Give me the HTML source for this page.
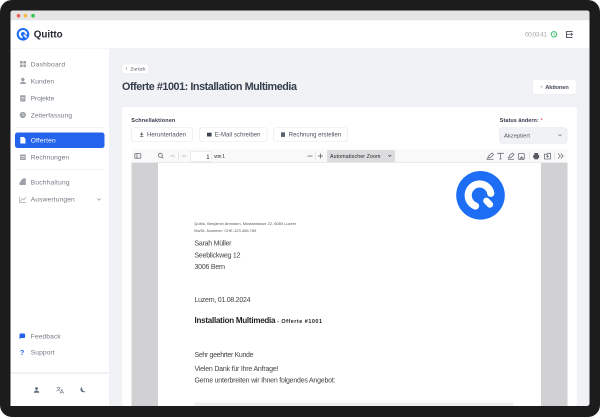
<!DOCTYPE html>
<html lang="de"><head><meta charset="utf-8"><title>Quitto</title>
<style>
html,body{margin:0;padding:0;background:#fff;width:600px;height:417px;overflow:hidden}
svg{display:block}
text{font-family:"Liberation Sans",sans-serif;dominant-baseline:auto;filter:blur(.22px)}
.n{font-size:6.6px;fill:#737983}
.b{font-size:6px;fill:#484f5b}
.d{font-size:7px;fill:#444}
.s{stroke:#6b6f76;fill:none;stroke-width:.8}
.g{fill:#9ca0a8}
</style></head><body>
<svg width="600" height="417" viewBox="0 0 600 417" xmlns="http://www.w3.org/2000/svg">
<rect width="600" height="417" rx="12" fill="#1c1c1c"/>
<rect x="10.500" y="10.500" width="579" height="395.500" rx="2.500" fill="#f1f2f5"/>
<path d="M10.500 20V13a2.500 2.500 0 0 1 2.500-2.500H587a2.500 2.500 0 0 1 2.500 2.500V20z" fill="#e5e5e5"/>
<circle cx="18.500" cy="15.700" r="1.800" fill="#ee5f57"/><circle cx="25.500" cy="15.700" r="1.800" fill="#f5bd3e"/><circle cx="33" cy="15.700" r="1.800" fill="#35c448"/>

<!-- header -->
<rect x="10.500" y="20.500" width="579" height="27.500" fill="#fff"/>
<rect x="10.500" y="48" width="98.500" height="358" fill="#fff"/>
<rect x="10.500" y="48" width="98.500" height=".6" fill="#eeeff2"/>
<circle cx="23" cy="34.300" r="6.300" fill="#1d6ef5"/>
<path d="M26.200 33.800A3.200 3.200 0 1 0 21.700 37.100" fill="none" stroke="#fff" stroke-width="2" stroke-linecap="round"/>
<path d="M24.300 35.300L26 37" stroke="#fff" stroke-width="1.700" stroke-linecap="round"/>
<text x="33.800" y="37.600" font-size="9.800" font-weight="700" fill="#24282f" textLength="28.800">Quitto</text>
<text x="525" y="36.500" font-size="6.500" fill="#a3a7ad" textLength="22">00:03:41</text>
<circle cx="554" cy="34.300" r="2.700" fill="none" stroke="#3cbf6e" stroke-width="1"/><path d="M554 32.800V34.500L555 35.500" stroke="#3cbf6e" stroke-width=".7" fill="none"/>
<path d="M572 32V31.500H566.500V37.500H572V37" fill="none" stroke="#5c6169" stroke-width="1.100"/><path d="M567 34.300H572.500M571 33L572.500 34.300L571 35.600" fill="none" stroke="#5c6169" stroke-width=".9"/>

<!-- sidebar -->
<g class="g"><rect x="20" y="61" width="2.600" height="2.600"/><rect x="23.400" y="61" width="2.600" height="2.600"/><rect x="20" y="64.500" width="2.600" height="2.600"/><rect x="23.400" y="64.500" width="2.600" height="2.600"/></g>
<text class="n" x="30.700" y="66.400" textLength="34.300">Dashboard</text>
<circle cx="22.800" cy="79.500" r="1.700" class="g"/><path d="M20 84c0-3 6-3 6 0z" class="g"/>
<text class="n" x="30.700" y="83.400" textLength="23.300">Kunden</text>
<rect x="20.200" y="95.300" width="5.300" height="6.200" rx=".6" class="g"/><rect x="21.400" y="97" width="3" height=".6" fill="#fff"/><rect x="21.400" y="98.700" width="3" height=".6" fill="#fff"/>
<text class="n" x="30.700" y="100.400" textLength="23.600">Projekte</text>
<circle cx="22.800" cy="115" r="3.100" class="g"/><path d="M22.800 113.300V115.200H24.300" stroke="#fff" stroke-width=".6" fill="none"/>
<text class="n" x="30.700" y="117.400" textLength="41.300">Zeiterfassung</text>
<rect x="15" y="127" width="89" height=".7" fill="#eceef1"/>
<rect x="15" y="132.500" width="89.500" height="15.500" rx="2.500" fill="#2463eb"/>
<path d="M20.300 137h3.500l1.700 1.700v4.800h-5.200z" fill="#fff"/>
<text x="30.700" y="142.500" font-size="6.600" fill="#fff" textLength="25">Offerten</text>
<rect x="20.200" y="154.500" width="5.500" height="5.500" class="g"/><rect x="21.200" y="156" width="3.500" height=".6" fill="#fff"/><rect x="21.200" y="157.800" width="3.500" height=".6" fill="#fff"/>
<text class="n" x="30.700" y="159.400" textLength="38.400">Rechnungen</text>
<rect x="15" y="169.300" width="89" height=".7" fill="#eceef1"/>
<path d="M19.500 185v-3l1.500-.5v-1.500l1.500-.5v-1l3.300-.3v6.800z" class="g"/>
<text class="n" x="30.700" y="184.700" textLength="38.800">Buchhaltung</text>
<path d="M19.500 196.500V202.500H26M20.500 201L22.500 198.500L24 199.700L26 197" fill="none" stroke="#a5a9b0" stroke-width=".7"/>
<text class="n" x="30.700" y="201.700" textLength="44">Auswertungen</text>
<path d="M97.300 198.500L99 200.200L100.700 198.500" fill="none" stroke="#8f939a" stroke-width=".7"/>
<path d="M19.500 334.500a1 1 0 0 1 1-1h3.600a1 1 0 0 1 1 1v2.500a1 1 0 0 1-1 1H21l-1.500 1z" fill="#2463eb"/>
<text class="n" x="30.700" y="338.600" textLength="30">Feedback</text>
<text x="20" y="354.800" font-size="7" font-weight="700" fill="#2463eb">?</text>
<text class="n" x="30.700" y="354.400" textLength="24">Support</text>
<rect x="10.500" y="372" width="98.500" height="2" fill="#f1f2f5"/>
<circle cx="36.500" cy="388.500" r="1.400" fill="#5f6b7a"/><path d="M33.800 392.700c0-3 5.400-3 5.400 0z" fill="#5f6b7a"/>
<path d="M56.500 387.500h4M58.500 386.800v.7M60 387.500c-.3 1.800-2 3-3.500 3.600M57.500 388.500c.5 1 1.300 1.700 2.400 2.200M60 393.500l1.800-4 1.800 4M60.700 392.300h2.200" fill="none" stroke="#6b7684" stroke-width=".6"/>
<path d="M81.800 387c-1.800.8-2 4.500 1 5.200 1 .2 2 0 2.800-.6-2.500 0-3.800-2-3.800-4.600z" fill="#5f6b7a"/>

<!-- main -->
<rect x="122" y="64" width="26.500" height="9.500" rx="2.500" fill="#fff" stroke="#e8e9ec" stroke-width=".5"/>
<path d="M127 67.700L125.900 68.700L127 69.700" fill="none" stroke="#555" stroke-width=".5"/>
<text x="130.500" y="70.600" font-size="4.700" fill="#3f4652" textLength="15">Zurück</text>
<text x="122" y="89.800" font-size="10.800" font-weight="700" fill="#353e4c" textLength="175">Offerte #1001: Installation Multimedia</text>
<rect x="532.500" y="79.500" width="44.500" height="15" rx="3" fill="#fff" stroke="#e6e7ea" stroke-width=".6"/>
<path d="M540.500 86.300L541.600 87.400L542.700 86.300" fill="none" stroke="#555" stroke-width=".5"/>
<text x="545.300" y="89" font-size="5.800" font-weight="700" fill="#4a515d" textLength="23.500">Aktionen</text>

<rect x="122" y="107" width="455" height="299" rx="3" fill="#fff"/>
<text x="131.300" y="122" font-size="5.500" font-weight="700" fill="#353e4c" textLength="44">Schnellaktionen</text>
<text x="499.800" y="122" font-size="5.500" font-weight="700" fill="#353e4c" textLength="39">Status ändern:</text>
<text x="540.500" y="122.500" font-size="6" fill="#e23b3b">*</text>

<g fill="#fff" stroke="#e6e7ea" stroke-width=".6">
<rect x="131.500" y="127.500" width="61" height="14" rx="2.500"/>
<rect x="199.500" y="127.500" width="67.500" height="14" rx="2.500"/>
<rect x="273.500" y="127.500" width="74" height="14" rx="2.500"/>
</g>
<path d="M141.700 132.200V135M140.300 133.800L141.700 135.200L143.100 133.800M140 136.700H143.400" fill="none" stroke="#3f4652" stroke-width=".7"/>
<text class="b" x="147" y="136.500" textLength="39">Herunterladen</text>
<rect x="207" y="132.700" width="4.600" height="3.800" fill="#3f4652"/>
<text class="b" x="214.800" y="136.500" textLength="45.700">E-Mail schreiben</text>
<rect x="281" y="132.300" width="4" height="4.600" fill="#5a6270"/>
<text class="b" x="288.800" y="136.500" textLength="52.300">Rechnung erstellen</text>

<rect x="499.500" y="127.500" width="67.500" height="16" rx="3" fill="#f1f2f5" stroke="#e6e7ea" stroke-width=".6"/>
<text x="504" y="137.500" font-size="5.700" fill="#4a505b" textLength="26">Akzeptiert</text>
<path d="M558.500 134.500L560 136L561.500 134.500" fill="none" stroke="#666" stroke-width=".6"/>

<!-- pdf toolbar -->
<rect x="131.500" y="149" width="436" height="14" rx="1.500" fill="#f9f9fa"/>
<rect x="131.500" y="162.300" width="436" height=".8" fill="#e4e4e6"/>
<rect x="134.800" y="153.500" width="6" height="4.700" rx=".6" class="s"/><path d="M137 153.500V158.200" class="s"/>
<circle cx="160.300" cy="155.300" r="2" class="s"/><path d="M161.800 156.800L163.400 158.400" class="s"/>
<path d="M170.500 157L172.500 155L174.500 157" fill="none" stroke="#b9bbc0" stroke-width=".7"/>
<rect x="178.300" y="151.500" width=".5" height="8" fill="#cfd0d3"/>
<path d="M182 155L184 157L186 155" fill="none" stroke="#b9bbc0" stroke-width=".7"/>
<rect x="190.500" y="151.300" width="21.300" height="10" rx="1" fill="#fff" stroke="#d9d9dc" stroke-width=".5"/>
<text x="206.300" y="158.800" font-size="6" fill="#222">1</text>
<text x="214" y="158.200" font-size="5" fill="#333" textLength="11">von 1</text>
<rect x="307.500" y="155.700" width="5" height=".7" fill="#555"/>
<rect x="315.300" y="151.500" width=".5" height="8" fill="#cfd0d3"/>
<path d="M318 156H323M320.500 153.500V158.500" stroke="#555" stroke-width=".7" fill="none"/>
<rect x="327" y="150" width="68" height="12" rx="1" fill="#dcdcde"/>
<text x="330" y="158" font-size="5.200" fill="#222" textLength="50.500">Automatischer Zoom</text>
<path d="M388.300 155L389.800 156.500L391.300 155" fill="none" stroke="#444" stroke-width=".7"/>
<path d="M487.500 158.200L489 155.500L492 153L493.500 154.500L490.800 157.300Z" class="s"/><path d="M486.500 159.300H493.500" class="s"/>
<path d="M497.500 153.800V153.300H503.500V153.800M500.500 153.300V159M499.300 159H501.700" class="s"/>
<path d="M508.500 158L509.500 155.500L512.500 153L514 154.500L511.300 157.300Z" class="s"/><path d="M508 159.300H514" class="s"/>
<rect x="518.500" y="153.500" width="5.800" height="5.800" rx=".5" class="s"/><path d="M519.500 158.500L521.500 156.300L524 158.500Z" fill="#6b6f76"/>
<rect x="529.500" y="151.500" width=".5" height="8" fill="#cfd0d3"/>
<rect x="533.200" y="155" width="6" height="3" rx=".5" fill="#56595f"/><rect x="534.300" y="153" width="3.800" height="2" fill="#56595f"/><rect x="534.300" y="157.500" width="3.800" height="1.800" fill="#56595f"/>
<path d="M544.500 154.200H547L547.800 153.300H550.500V159H544.500Z" class="s"/><path d="M546 156.200H549M547.500 154.800V157.700" class="s"/>
<rect x="554" y="151.500" width=".5" height="8" fill="#cfd0d3"/>
<path d="M558 153.500L560.300 156L558 158.500M560.800 153.500L563.100 156L560.800 158.500" class="s"/>

<!-- pdf viewer -->
<rect x="131.500" y="163" width="436" height="243" fill="#d1d1d3"/>
<rect x="158" y="163" width="383" height="243" fill="#fff"/>
<circle cx="480.500" cy="195.300" r="24.300" fill="#1d6ef5"/>
<path d="M490.800 193.300A11.400 11.400 0 1 0 475.500 206" fill="none" stroke="#fff" stroke-width="7.200" stroke-linecap="round"/>
<path d="M486.400 200.800L490 204.500" stroke="#fff" stroke-width="6.400" stroke-linecap="round"/>

<text x="194.300" y="224.800" font-size="3.900" fill="#555" textLength="102">Quitto, Benjamin Ammann, Mustastrasse 22, 6080 Luzern</text>
<text x="194.300" y="231.800" font-size="3.900" fill="#555" textLength="62">MwSt.-Nummer: CHE-123.456.789</text>
<text class="d" x="194.500" y="245.700" textLength="37">Sarah Müller</text>
<text class="d" x="194.500" y="257.500" textLength="46">Seeblickweg 12</text>
<text class="d" x="194.500" y="269" textLength="30.500">3006 Bern</text>
<text class="d" x="194.500" y="301.800" textLength="56">Luzern, 01.08.2024</text>
<text x="194.500" y="322.800" font-size="8" font-weight="700" fill="#222" textLength="81">Installation Multimedia</text>
<text x="277" y="322.800" font-size="5.500" font-weight="700" fill="#222" textLength="45">- Offerte #1001</text>
<text class="d" x="194.500" y="356.800" textLength="59">Sehr geehrter Kunde</text>
<text class="d" x="194.500" y="370.800" textLength="84">Vielen Dank für Ihre Anfrage!</text>
<text class="d" x="194.500" y="382.500" textLength="141">Gerne unterbreiten wir Ihnen folgendes Angebot:</text>
<rect x="194.500" y="402.500" width="319" height="3.500" fill="#f0f0f1"/>
</svg>
</body></html>
